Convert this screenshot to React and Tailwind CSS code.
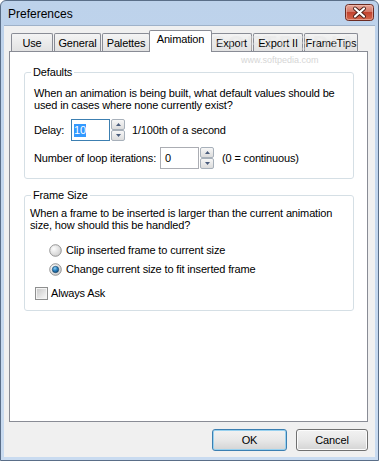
import { useState } from 'react'

const TABS = [
  { label: 'Use', w: 'w-[42px]', ml: 'ml-[2px]' },
  { label: 'General', w: 'w-[47px]', ml: 'ml-[1px]' },
  { label: 'Palettes', w: 'w-[48px]', ml: 'ml-[1px]' },
  { label: 'Animation', w: 'w-[63px]', ml: 'ml-[-1px]', active: true },
  { label: 'Export', w: 'w-[41px]', ml: 'ml-[-1px]' },
  { label: 'Export II', w: 'w-[50px]', ml: 'ml-[1px]' },
  { label: 'FrameTips', w: 'w-[54px]', ml: 'ml-[1px]' },
]

function CloseButton() {
  return (
    <svg width="29" height="17" viewBox="0 0 29 17">
      <defs>
        <linearGradient id="cg" x1="0" y1="0" x2="0" y2="1">
          <stop offset="0" stopColor="#e9a99c" />
          <stop offset="0.45" stopColor="#d47868" />
          <stop offset="0.5" stopColor="#c2432f" />
          <stop offset="1" stopColor="#d66a4f" />
        </linearGradient>
      </defs>
      <rect x="0.5" y="0.5" width="28" height="16" rx="3" fill="url(#cg)" stroke="#6b2b22" />
      <rect x="1.5" y="1.5" width="26" height="14" rx="2" fill="none" stroke="#f2c3b8" strokeOpacity="0.6" />
      <path d="M10 4.5 L19 12.5 M19 4.5 L10 12.5" stroke="#4a2019" strokeWidth="4" strokeLinecap="round" />
      <path d="M10 4.5 L19 12.5 M19 4.5 L10 12.5" stroke="#ffffff" strokeWidth="2.2" strokeLinecap="round" />
    </svg>
  )
}

function Spin() {
  return (
    <div className="flex flex-col w-[14px] h-[22px]">
      <div className="h-[11px] border border-[#a7b0ba] rounded-[2px] bg-gradient-to-b from-[#f7f7f7] to-[#dcdcdc] flex items-center justify-center">
        <svg width="5" height="3" viewBox="0 0 5 3"><path d="M0 3 L2.5 0 L5 3 Z" fill="#4a5c7c" /></svg>
      </div>
      <div className="h-[11px] border border-[#a7b0ba] rounded-[2px] bg-gradient-to-b from-[#f7f7f7] to-[#dcdcdc] flex items-center justify-center">
        <svg width="5" height="3" viewBox="0 0 5 3"><path d="M0 0 L5 0 L2.5 3 Z" fill="#4a5c7c" /></svg>
      </div>
    </div>
  )
}

function Radio({ checked }) {
  return (
    <svg width="13" height="13" viewBox="0 0 13 13">
      <defs>
        <radialGradient id={checked ? 'rf1' : 'rf0'} cx="0.35" cy="0.35" r="0.7">
          <stop offset="0" stopColor="#fdfdfd" />
          <stop offset="1" stopColor="#cfcfcf" />
        </radialGradient>
        <radialGradient id="rdot" cx="0.4" cy="0.3" r="0.7">
          <stop offset="0" stopColor="#8fd0f5" />
          <stop offset="0.5" stopColor="#2f86c4" />
          <stop offset="1" stopColor="#0e4e80" />
        </radialGradient>
      </defs>
      <circle cx="6.5" cy="6.5" r="5.8" fill={`url(#${checked ? 'rf1' : 'rf0'})`} stroke="#8b8b8b" strokeWidth="0.9" />
      {checked && <circle cx="6.5" cy="6.5" r="3.2" fill="url(#rdot)" stroke="#1a3f5f" strokeWidth="0.6" />}
    </svg>
  )
}

export default function App() {
  const [mode, setMode] = useState('change')
  const [ask, setAsk] = useState(false)

  return (
    <div className="w-[379px] h-[461px] flex flex-col bg-gradient-to-b from-[#bdd2eb] to-[#c9dbf0] border border-[#5a6e88] rounded-t-[6px] font-['Liberation_Sans',Arial,sans-serif] text-[11px] tracking-[-0.15px] text-black leading-[13px] overflow-hidden">
      <div className="h-[24px] flex items-start justify-between pl-[7px] pr-[4px] pt-[3px]">
        <span className="text-[12px] leading-[16px] mt-[2px] tracking-normal">Preferences</span>
        <CloseButton />
      </div>

      <div className="relative flex-1 mx-[3px] mb-[3px] bg-[#f0f0f0] border-t border-[#9fb2c9] flex flex-col">
        <div className="flex items-end h-[25px] pl-[5px] relative">
          {TABS.map((t) => (
            <div
              key={t.label}
              className={`${t.w} ${t.ml} flex justify-center border border-b-0 border-[#898c95] rounded-t-[2px] ${t.active ? 'h-[22px] bg-white relative z-10 mb-[-1px] pt-[2px]' : 'h-[18px] bg-gradient-to-b from-[#f4f4f4] to-[#e2e2e2] pt-[3px]'}`}
            >
              {t.label}
            </div>
          ))}
        </div>

        <div className="ml-[5px] mr-[7px] h-[371px] bg-white border border-[#898c95] pl-[14px] pr-[13px] pt-[14px]">
          <fieldset className="border border-[#d5dfe5] rounded-[3px] pb-[9px]">
            <legend className="ml-[6px] px-[2px] leading-[13px]">Defaults</legend>
            <p className="pl-[9px] pt-[8px] leading-[12px]">
              When an animation is being built, what default values should be<br />
              used in cases where none currently exist?
            </p>
            <div className="flex items-center pl-[9px] mt-[8px]">
              <span className="w-[37px]">Delay:</span>
              <div className="w-[39px] h-[22px] border border-[#3c7fb1] flex items-center pl-[2px]">
                <span className="bg-[#3399ff] text-white leading-[13px]">10</span>
              </div>
              <div className="ml-[1px]"><Spin /></div>
              <span className="ml-[7px]">1/100th of a second</span>
            </div>
            <div className="flex items-center pl-[9px] mt-[6px]">
              <span className="w-[126px]">Number of loop iterations:</span>
              <div className="w-[39px] h-[22px] border border-[#abadb3] flex items-center pl-[4px]">0</div>
              <div className="ml-[1px]"><Spin /></div>
              <span className="ml-[8px]">(0 = continuous)</span>
            </div>
          </fieldset>

          <fieldset className="border border-[#d5dfe5] rounded-[3px] mt-[10px] pb-[10px]">
            <legend className="ml-[6px] px-[2px] leading-[13px]">Frame Size</legend>
            <p className="pl-[5px] pt-[5px] leading-[12px]">
              When a frame to be inserted is larger than the current animation<br />
              size, how should this be handled?
            </p>
            <div className="pl-[24px] mt-[13px] flex flex-col gap-[6px]">
              <label className="flex items-center gap-[4px] h-[13px]" onClick={() => setMode('clip')}>
                <Radio checked={mode === 'clip'} />
                <span>Clip inserted frame to current size</span>
              </label>
              <label className="flex items-center gap-[4px] h-[13px]" onClick={() => setMode('change')}>
                <Radio checked={mode === 'change'} />
                <span>Change current size to fit inserted frame</span>
              </label>
            </div>
            <label className="flex items-center pl-[10px] mt-[11px] gap-[3px]" onClick={() => setAsk(!ask)}>
              <span className="w-[13px] h-[13px] border border-[#8e8f8f] bg-white flex items-center justify-center">
                <span className="w-[11px] h-[11px] border border-[#f4f4f4] bg-gradient-to-br from-[#cbcbcb] to-[#f6f6f6] flex items-center justify-center text-[10px] leading-[10px]">
                  {ask ? '✓' : ''}
                </span>
              </span>
              <span>Always Ask</span>
            </label>
          </fieldset>
        </div>

        <div className="flex justify-end mr-[7px] mt-[7px] gap-[9px]">
          <button className="w-[75px] h-[22px] rounded-[3px] border border-[#3c7fb1] bg-gradient-to-b from-[#f2f2f2] via-[#e8e8e8] to-[#d4d4d4] shadow-[inset_0_0_0_1px_#98d1ef]">OK</button>
          <button className="w-[72px] h-[22px] rounded-[3px] border border-[#707070] bg-gradient-to-b from-[#f2f2f2] via-[#e8e8e8] to-[#d4d4d4] shadow-[inset_0_0_0_1px_#fcfcfc]">Cancel</button>
        </div>

        <div className="pointer-events-none absolute left-[207px] top-[6px] text-[21px] leading-[22px] font-bold tracking-[3px] text-[#e4e4e4] opacity-40">SOFTPEDIA</div>
        <div className="pointer-events-none absolute left-[237px] top-[29px] text-[9px] leading-[10px] tracking-normal text-[#d6d6d6]">www.softpedia.com</div>
      </div>
    </div>
  )
}
